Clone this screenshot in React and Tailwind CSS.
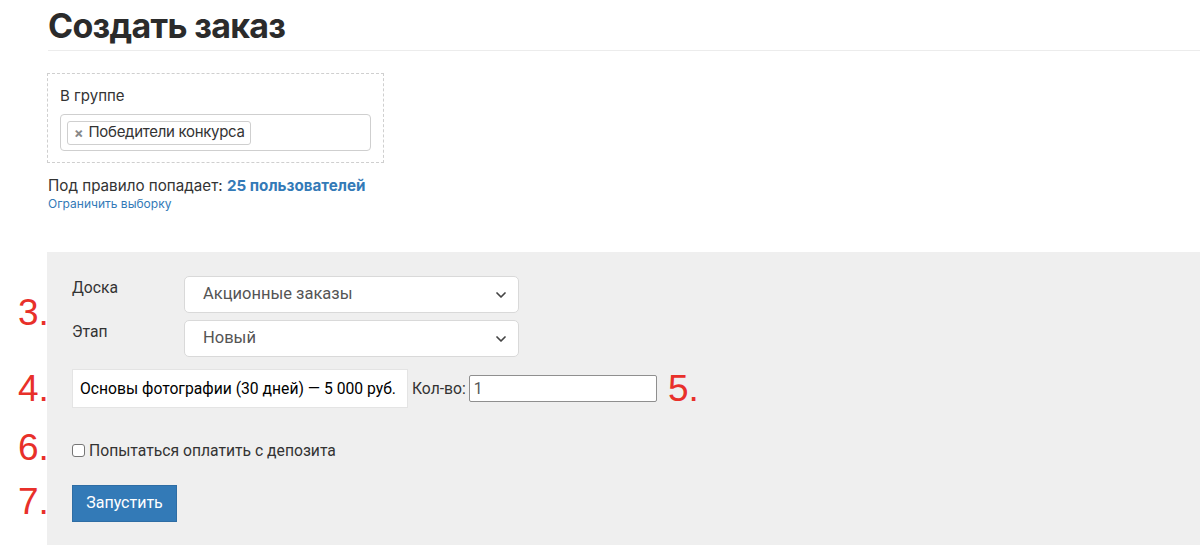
import { ChevronDown } from "lucide-react";

function Mark({ children, className }) {
  return (
    <span
      className={`absolute text-[37px] leading-none text-[#e8302a] font-['Liberation_Sans',Arial,sans-serif] ${className}`}
    >
      {children}
    </span>
  );
}

function SelectBox({ value }) {
  return (
    <div className="flex items-center justify-between w-[335px] h-[37px] pl-[18px] pr-[9px] bg-white border border-[#d9d9d9] rounded-[5px] text-[16.5px] text-[#555]">
      <span>{value}</span>
      <ChevronDown className="w-4 h-4 text-[#444]" strokeWidth={2.6} />
    </div>
  );
}

export default function App() {
  return (
    <div className="w-[1200px] h-[560px] overflow-hidden bg-white font-['Inter',sans-serif] text-[#333]">
      {/* Header */}
      <div className="pl-[48px] pt-[6px]">
        <h1 className="text-[34px] font-bold leading-[40px] text-[#2b2b2b] tracking-[-0.7px]">
          Создать заказ
        </h1>
        <div className="mt-[4px] border-b border-[#ececec]" />
      </div>

      {/* Rule */}
      <div className="pl-[47px] mt-[22px]">
        <div className="w-[337px] h-[90px] border border-dashed border-[#cfcfcf] px-[12px] pt-[12px]">
          <div className="text-[15px] leading-[20px] text-[#333]">В группе</div>
          <div className="mt-[8px] h-[37px] border border-[#cfcfcf] rounded-[4px] px-[6px] flex items-center">
            <div className="flex items-center h-[24px] border border-[#cfcfcf] rounded-[3px] pl-[6px] pr-[5px] gap-[5px] text-[15px] text-[#333]">
              <span className="text-[14px] font-bold text-[#888] leading-none">×</span>
              <span className="tracking-[-0.3px]">Победители конкурса</span>
            </div>
          </div>
        </div>
        <div className="mt-[13px] text-[15.2px] leading-[20px] ml-[1px]">
          Под правило попадает:{" "}
          <a className="font-bold text-[#337ab7]">25 пользователей</a>
        </div>
        <div className="text-[12px] leading-[16px] text-[#337ab7] ml-[1px]">Ограничить выборку</div>
      </div>

      {/* Action panel */}
      <div className="relative ml-[47px] mt-[40px] h-[293px] bg-[#efefef] pl-[25px] pt-[24px] font-['Roboto',sans-serif] text-[15.7px] text-[#333]">
        <Mark className="left-[-29px] top-[42px]">3.</Mark>
        <div className="flex flex-col gap-[7px]">
          <div className="flex">
            <div className="w-[112px] pt-[2px] leading-[20px]">Доска</div>
            <SelectBox value="Акционные заказы" />
          </div>
          <div className="flex">
            <div className="w-[112px] pt-[2px] leading-[20px]">Этап</div>
            <SelectBox value="Новый" />
          </div>
        </div>

        <div className="relative flex items-center mt-[12px]">
          <Mark className="left-[-54px] top-[1px]">4.</Mark>
          <div className="h-[39px] w-[336px] bg-white border border-[#e4e4e4] flex items-center pl-[7px] text-black whitespace-nowrap">
            Основы фотографии (30 дней) — 5 000 руб.
          </div>
          <span className="ml-[4px]">Кол-во:</span>
          <div className="ml-[3px] w-[188px] h-[27px] bg-white border border-[#8f8f8f] rounded-[2px] flex items-center pl-[4px] text-[#555]">
            1
          </div>
          <Mark className="left-[596px] top-[1px]">5.</Mark>
        </div>

        <div className="relative flex items-center mt-[31px] gap-[4px]">
          <Mark className="left-[-54px] top-[-10px]">6.</Mark>
          <span className="w-[13px] h-[13px] border border-[#767676] rounded-[3px] bg-white" />
          <span>Попытаться оплатить с депозита</span>
        </div>

        <div className="relative mt-[22px]">
          <Mark className="left-[-54px] top-[-2px]">7.</Mark>
          <button className="w-[105px] h-[37px] bg-[#337ab7] border border-[#2e6da4] text-white text-[16px]">
            Запустить
          </button>
        </div>
      </div>
    </div>
  );
}
